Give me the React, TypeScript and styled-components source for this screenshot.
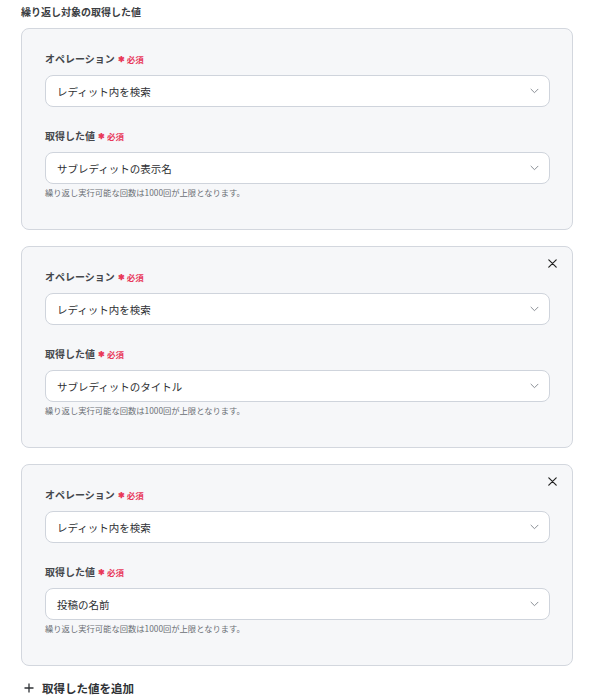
import React from 'react';
import styled, { createGlobalStyle } from 'styled-components';

const GlobalStyle = createGlobalStyle`
  body {
    margin: 0;
    background: #fff;
    font-family: "Noto Sans CJK JP", "Noto Sans", sans-serif;
    color: #333;
  }
`;

const Page = styled.div`
  padding: 5px 21px 0 21px;
  width: 552px;
`;

const Heading = styled.div`
  font-size: 10px;
  line-height: 14px;
  font-weight: 600;
  color: #3a3d42;
  margin-bottom: 9px;
`;

const List = styled.div`
  display: flex;
  flex-direction: column;
  gap: 16px;
`;

const Card = styled.div`
  position: relative;
  background: #f6f7f9;
  border: 1px solid #d3d7de;
  border-radius: 8px;
  padding: 23px 22px 31px 23px;
  display: flex;
  flex-direction: column;
`;

const CloseButton = styled.button`
  position: absolute;
  top: 9px;
  right: 13px;
  width: 14px;
  height: 14px;
  padding: 0;
  border: none;
  background: none;
  display: flex;
  align-items: center;
  justify-content: center;
  cursor: pointer;
`;

const Label = styled.div<{ $gap?: number }>`
  display: flex;
  align-items: center;
  gap: 3px;
  height: 14px;
  font-size: 10px;
  line-height: 14px;
  font-weight: 600;
  color: #44474c;
  margin-top: ${(p) => p.$gap ?? 0}px;
  margin-bottom: 9px;
`;

const Required = styled.span`
  color: #e8385a;
  font-size: 8.5px;
  line-height: 14px;
  font-weight: 600;
  display: flex;
  align-items: center;
  gap: 2px;
`;

const Star = styled.span`
  font-size: 8px;
  line-height: 1;
`;

const Select = styled.div`
  height: 32px;
  box-sizing: border-box;
  background: #fff;
  border: 1px solid #cfd4dc;
  border-radius: 8px;
  display: flex;
  align-items: center;
  justify-content: space-between;
  padding: 0 10px 0 11px;
  font-size: 10.5px;
  color: #2e3033;
`;

const Hint = styled.div`
  font-size: 8.3px;
  line-height: 11px;
  height: 11px;
  color: #6b6f75;
  margin-top: 3px;
`;

const AddButton = styled.div`
  display: flex;
  align-items: center;
  gap: 8px;
  margin-top: 14px;
  padding-left: 3px;
  font-size: 11.5px;
  line-height: 16px;
  font-weight: 600;
  color: #2f3236;
`;

const Chevron = () => (
  <svg width="9" height="6" viewBox="0 0 9 6" fill="none">
    <path d="M1 1.2l3.5 3.5 3.5-3.5" stroke="#8a8f96" strokeWidth="1" strokeLinecap="round" strokeLinejoin="round" />
  </svg>
);

const Cross = () => (
  <svg width="9" height="9" viewBox="0 0 9 9" fill="none">
    <path d="M0.8 0.8l7.4 7.4M8.2 0.8L0.8 8.2" stroke="#222" strokeWidth="1.2" strokeLinecap="round" />
  </svg>
);

const Plus = () => (
  <svg width="10" height="10" viewBox="0 0 10 10" fill="none">
    <path d="M5 0.5v9M0.5 5h9" stroke="#2f3236" strokeWidth="1.3" />
  </svg>
);

type Entry = { operation: string; value: string; removable: boolean };

const entries: Entry[] = [
  { operation: 'レディット内を検索', value: 'サブレディットの表示名', removable: false },
  { operation: 'レディット内を検索', value: 'サブレディットのタイトル', removable: true },
  { operation: 'レディット内を検索', value: '投稿の名前', removable: true },
];

const RequiredMark = () => (
  <Required>
    <Star>✱</Star>必須
  </Required>
);

const App: React.FC = () => (
  <>
    <GlobalStyle />
    <Page>
      <Heading>繰り返し対象の取得した値</Heading>
      <List>
        {entries.map((e, i) => (
          <Card key={i}>
            {e.removable && (
              <CloseButton aria-label="削除">
                <Cross />
              </CloseButton>
            )}
            <Label>
              オペレーション
              <RequiredMark />
            </Label>
            <Select>
              {e.operation}
              <Chevron />
            </Select>
            <Label $gap={22}>
              取得した値
              <RequiredMark />
            </Label>
            <Select>
              {e.value}
              <Chevron />
            </Select>
            <Hint>繰り返し実行可能な回数は1000回が上限となります。</Hint>
          </Card>
        ))}
      </List>
      <AddButton>
        <Plus />
        取得した値を追加
      </AddButton>
    </Page>
  </>
);

export default App;
